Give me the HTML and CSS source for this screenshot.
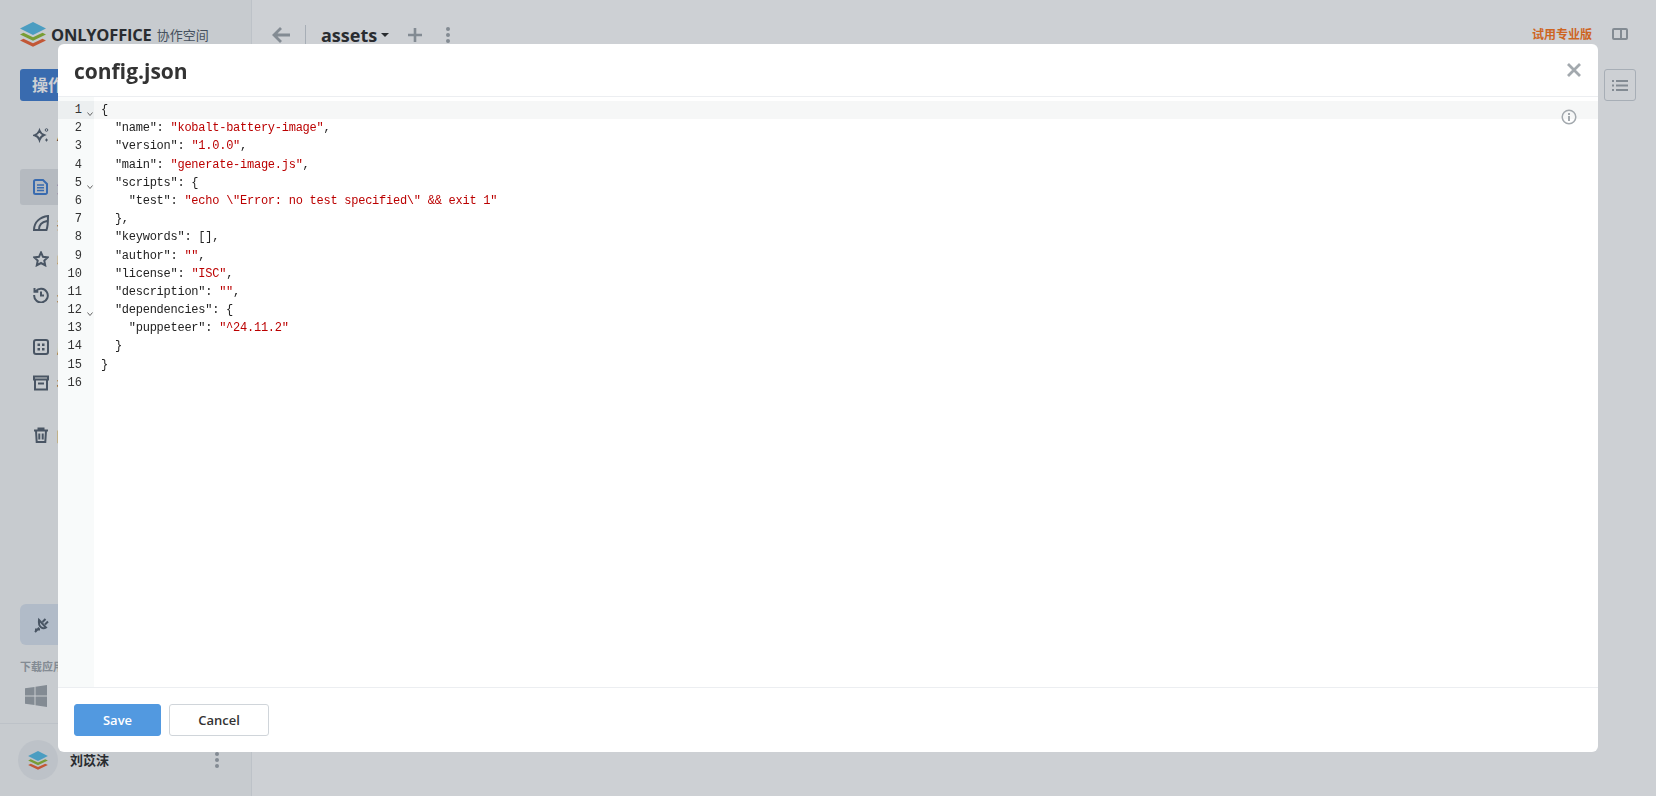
FILE: index.html
```html
<!DOCTYPE html>
<html lang="zh">
<head>
<meta charset="utf-8">
<title>config.json</title>
<link rel="stylesheet" href="styles.css">
</head>
<body>
<div class="app">
  <aside class="sidebar">
    <div class="logo">
      <svg class="logo-mark" viewBox="0 0 26 25"><path fill="#f2683a" d="M0 18.500 3.500 16.800 13 21.200 22.500 16.800 26 18.500 13 24.700z"/><path fill="#95c038" d="M0 12.500 3.500 10.800 13 15.200 22.500 10.800 26 12.500 13 18.700z"/><path fill="#5dc0e8" d="M13 0 26 6.500 13 13 0 6.500z"/></svg>
      <span class="logo-word">ONLYOFFICE</span><span class="logo-sub">协作空间</span>
    </div>
    <div class="action">操作</div>
    <nav class="nav-group">
      <div class="nav-item"><svg class="ico" viewBox="0 0 16 16"><path class="ln" d="M6.500 3.500C7.500 6 8.500 7 11 8 8.500 9 7.500 10 6.500 13 5.500 10 4.500 9 1.500 8.300 4.500 7 5.500 6 6.500 3.500z"/><circle class="thin" cx="13.500" cy="3" r="1.300"/><path class="thin" d="M13.500 11.500v3M12 13h3"/></svg><span>AI 代理</span></div>
    </nav>
    <nav class="nav-group">
      <div class="nav-item active"><svg class="ico" viewBox="0 0 16 16"><path class="doc" d="M2.500 1h7.500l4 4v8.500a1.500 1.500 0 0 1-1.500 1.500h-10A1.500 1.500 0 0 1 1 13.500v-11A1.500 1.500 0 0 1 2.500 1z"/><path class="doc-lines" d="M4 6h7M4 8.700h7M4 11.400h7"/></svg><span class="blue">文档</span></div>
      <div class="nav-item"><svg class="ico" viewBox="0 0 16 16"><path class="ln" d="M1 15h12.500C15 11 15 6 15 1 7 2 1 7 1 15zM6 14.500C6 10 9 7 14 6"/></svg><span>共享</span></div>
      <div class="nav-item"><svg class="ico" viewBox="0 0 16 16"><path class="ln" d="m8 1.500 2 4.300 4.700.6-3.400 3.200.9 4.700L8 12l-4.200 2.300.9-4.700L1.300 6.400 6 5.800z"/></svg><span>收藏</span></div>
      <div class="nav-item"><svg class="ico" viewBox="0 0 16 16"><path class="ln" d="M2.800 4.200A6.800 6.800 0 1 1 1.200 8M1.500 1v3.800H5.300M8 4.500V8.500h3"/></svg><span>最近</span></div>
    </nav>
    <nav class="nav-group">
      <div class="nav-item"><svg class="ico" viewBox="0 0 16 16"><rect class="ln" x="1" y="1" width="14" height="14" rx="2"/><path fill="#5a6673" d="M4.500 4.500h2.500V7H4.500zm4.500 0h2.500V7H9zM4.500 9H7v2.500H4.500zM9 9h2.500v2.500H9z"/></svg><span>房间</span></div>
      <div class="nav-item"><svg class="ico" viewBox="0 0 16 16"><path class="ln" d="M1 1.500h14v3H1zM2 4.500v10h12v-10M5 8.500h6"/></svg><span>存档</span></div>
    </nav>
    <nav class="nav-group">
      <div class="nav-item"><svg class="ico" viewBox="0 0 16 16"><path class="ln" d="M1 3.500h14M5.500 3.500V1.500h5v2M3 3.500l.7 11.500h8.600l.7-11.500M6.300 6.500v6M9.700 6.500v6"/></svg><span>回收站</span></div>
    </nav>
    <div class="spacer"></div>
    <div class="plug"><svg class="ico" viewBox="0 0 16 16"><path class="ln" d="M5 3 12 10.500C9 12.500 4 10.500 5 3zM1 15l4.200-4.200M8.500 5 11.500 2M11 7.500 14 4.500M1 12.500h5"/></svg></div>
    <div class="download">下载应用</div>
    <svg class="windows" viewBox="0 0 22 22"><path fill="#a3a9ae" d="M0 3.300 9.500 2v8.500H0zM10.500 1.800 22 0v10.500H10.500zM0 11.500h9.500V20L0 18.700zM10.500 11.500H22V22l-11.500-1.800z"/></svg>
    <div class="profile">
      <div class="avatar"><svg class="avatar-mark" viewBox="0 0 26 25"><path fill="#f2683a" d="M0 18.500 3.500 16.800 13 21.200 22.500 16.800 26 18.500 13 24.700z"/><path fill="#95c038" d="M0 12.500 3.500 10.800 13 15.200 22.500 10.800 26 12.500 13 18.700z"/><path fill="#5dc0e8" d="M13 0 26 6.500 13 13 0 6.500z"/></svg></div>
      <span class="name">刘苡沫</span>
      <span class="dots"><i></i><i></i><i></i></span>
    </div>
  </aside>
  <main class="main">
    <header class="topbar">
      <svg class="back" viewBox="0 0 18 16"><path fill="none" stroke="#a3a9ae" stroke-width="2.800" d="M18 8H2M9 1 2 8l7 7"/></svg>
      <span class="divider"></span>
      <span class="crumb">assets</span>
      <span class="caret"></span>
      <svg class="plus" viewBox="0 0 14 14"><path fill="none" stroke="#a3a9ae" stroke-width="2.600" d="M7 0v14M0 7h14"/></svg>
      <span class="dots top-dots"><i></i><i></i><i></i></span>
      <span class="grow"></span>
      <span class="trial">试用专业版</span>
      <svg class="panel" viewBox="0 0 16 12"><rect x="1" y="1" width="14" height="10" rx="1" fill="none" stroke="#a3a9ae" stroke-width="2"/><path d="M9 1v10" stroke="#a3a9ae" stroke-width="2"/></svg>
    </header>
    <div class="toolrow">
      <div class="list-btn"><svg viewBox="0 0 16 11"><path fill="#a3a9ae" d="M0 0h2v2H0zm4 0h12v2H4zM0 4.500h2v2H0zm4 0h12v2H4zM0 9h2v2H0zm4 0h12v2H4z"/></svg></div>
    </div>
  </main>
</div>
<div class="overlay"></div>
<section class="modal">
  <header class="modal-head">
    <h1>config.json</h1>
    <svg class="close" viewBox="0 0 14 14"><path fill="none" stroke="#a3a9ae" stroke-width="2.800" d="M1 1l12 12M13 1 1 13"/></svg>
  </header>
  <div class="editor">
    <div class="gutter">
      <div class="gnum on"><b>1</b><svg class="fold" viewBox="0 0 6 4"><path d="M.5.500 3 3.500 5.500.500"/></svg></div>
      <div class="gnum"><b>2</b></div>
      <div class="gnum"><b>3</b></div>
      <div class="gnum"><b>4</b></div>
      <div class="gnum"><b>5</b><svg class="fold" viewBox="0 0 6 4"><path d="M.5.500 3 3.500 5.500.500"/></svg></div>
      <div class="gnum"><b>6</b></div>
      <div class="gnum"><b>7</b></div>
      <div class="gnum"><b>8</b></div>
      <div class="gnum"><b>9</b></div>
      <div class="gnum"><b>10</b></div>
      <div class="gnum"><b>11</b></div>
      <div class="gnum"><b>12</b><svg class="fold" viewBox="0 0 6 4"><path d="M.5.500 3 3.500 5.500.500"/></svg></div>
      <div class="gnum"><b>13</b></div>
      <div class="gnum"><b>14</b></div>
      <div class="gnum"><b>15</b></div>
      <div class="gnum"><b>16</b></div>
    </div>
    <div class="code">
      <div class="line on">{</div>
      <div class="line">  "name": <s>"kobalt-battery-image"</s>,</div>
      <div class="line">  "version": <s>"1.0.0"</s>,</div>
      <div class="line">  "main": <s>"generate-image.js"</s>,</div>
      <div class="line">  "scripts": {</div>
      <div class="line">    "test": <s>"echo \"Error: no test specified\" &amp;&amp; exit 1"</s></div>
      <div class="line">  },</div>
      <div class="line">  "keywords": [],</div>
      <div class="line">  "author": <s>""</s>,</div>
      <div class="line">  "license": <s>"ISC"</s>,</div>
      <div class="line">  "description": <s>""</s>,</div>
      <div class="line">  "dependencies": {</div>
      <div class="line">    "puppeteer": <s>"^24.11.2"</s></div>
      <div class="line">  }</div>
      <div class="line">}</div>
      <div class="line"> </div>
    </div>
    <svg class="info" viewBox="0 0 16 16"><circle cx="8" cy="8" r="6.800" fill="none" stroke="#a3a9ae" stroke-width="1.500"/><path fill="#a3a9ae" d="M7 7h2v5H7zM7 4h2v2H7z"/></svg>
  </div>
  <footer class="modal-foot">
    <button class="btn save">Save</button>
    <button class="btn cancel">Cancel</button>
  </footer>
</section>
</body>
</html>
```
FILE: styles.css
```css
* { box-sizing: border-box; }
html, body { margin: 0; height: 100%; overflow: hidden; }
body {
  font-family: "Open Sans", "Noto Sans CJK SC", sans-serif;
  background: #fff;
  color: #333;
}
.app { display: flex; height: 796px; }

/* sidebar */
.sidebar {
  width: 252px;
  flex: none;
  display: flex;
  flex-direction: column;
  background: #f8f9f9;
  border-right: 1px solid #eceef1;
  padding-top: 22px;
}
.logo { display: flex; align-items: center; height: 25px; margin-left: 20px; }
.logo-mark { width: 26px; height: 25px; }
.logo-word { margin-left: 5px; font-size: 16.500px; font-weight: 700; color: #333; letter-spacing: -.2px; }
.logo-sub { margin-left: 5px; font-size: 13px; color: #555f6b; }
.action {
  margin: 22px 0 0 20px;
  width: 212px;
  height: 32px;
  line-height: 32px;
  padding-left: 12px;
  border-radius: 3px;
  background: #4781d1;
  color: #fff;
  font-size: 16px;
  font-weight: 700;
}
.nav-group { margin-top: 16px; }
.nav-item {
  display: flex;
  align-items: center;
  gap: 8px;
  height: 36px;
  margin-left: 20px;
  padding-left: 13px;
  border-radius: 3px 0 0 3px;
  font-size: 13px;
  font-weight: 600;
  color: #333;
}
.nav-item.active { background: #e1e4e7; }
.blue { color: #3d7ac8; }
.ico { width: 16px; height: 16px; flex: none; }
.ln { fill: none; stroke: #5a6673; stroke-width: 2; }
.thin { fill: none; stroke: #5a6673; stroke-width: 1; }
.doc { fill: none; stroke: #4781d1; stroke-width: 2; }
.doc-lines { fill: none; stroke: #4781d1; stroke-width: 1.500; }
.spacer { flex: 1; }
.plug {
  display: flex;
  align-items: center;
  margin-left: 20px;
  width: 212px;
  height: 41px;
  padding-left: 14px;
  border-radius: 6px;
  background: #dce5f1;
}
.download { margin: 14px 0 0 20px; height: 16px; line-height: 16px; font-size: 11px; font-weight: 600; color: #a3a9ae; }
.windows { width: 22px; height: 22px; margin: 10px 0 0 25px; }
.profile {
  display: flex;
  align-items: center;
  height: 73px;
  margin-top: 16px;
  padding-left: 18px;
  border-top: 1px solid #eceef1;
}
.avatar {
  display: flex;
  align-items: center;
  justify-content: center;
  width: 40px;
  height: 40px;
  border-radius: 50%;
  background: #eceef1;
}
.avatar-mark { width: 20px; height: 19px; }
.name { margin: -2px 0 0 12px; font-size: 13px; font-weight: 700; color: #333; }
.dots { display: flex; flex-direction: column; gap: 2px; }
.dots i { width: 4px; height: 4px; border-radius: 50%; background: #a3a9ae; }
.profile .dots { margin-left: 106px; }

/* main */
.main { flex: 1; display: flex; flex-direction: column; min-width: 0; }
.topbar { display: flex; align-items: center; height: 46px; padding: 24px 0 0 20px; }
.back { width: 18px; height: 16px; }
.divider { width: 1px; height: 20px; margin-left: 15px; background: #d0d5da; }
.crumb { margin-left: 15px; font-size: 18px; font-weight: 700; color: #333; line-height: 20px; }
.caret { margin-left: 4px; width: 0; height: 0; border: 4px solid transparent; border-top: 4px solid #333; border-bottom: 0; }
.plus { width: 14px; height: 14px; margin-left: 19px; }
.top-dots { margin-left: 24px; }
.grow { flex: 1; }
.trial { margin: -2px 20px 0 0; font-size: 12px; font-weight: 700; color: #ff7a1f; }
.panel { width: 16px; height: 12px; margin: -2px 28px 0 0; }
.toolrow { display: flex; justify-content: flex-end; padding: 23px 20px 0 0; }
.list-btn {
  display: flex;
  align-items: center;
  justify-content: center;
  width: 32px;
  height: 32px;
  border: 1px solid #d0d5da;
  border-radius: 3px;
}
.list-btn svg { width: 16px; height: 11px; }

/* overlay + modal */
.overlay { position: fixed; inset: 0; background: rgba(6, 22, 38, .2); }
.modal {
  position: fixed;
  left: 58px;
  top: 44px;
  width: 1540px;
  height: 708px;
  display: flex;
  flex-direction: column;
  background: #fff;
  border-radius: 6px;
  overflow: hidden;
}
.modal-head {
  display: flex;
  align-items: center;
  justify-content: space-between;
  height: 53px;
  flex: none;
  padding: 0 17px 0 16px;
  border-bottom: 1px solid #eceef1;
}
.modal-head h1 { margin: 2px 0 0; font-size: 21px; font-weight: 700; color: #333; line-height: 51px; }
.close { width: 14px; height: 14px; margin-top: -1px; }
.editor {
  position: relative;
  flex: 1;
  display: flex;
  min-height: 0;
  padding-top: 4px;
  font-family: "Liberation Mono", monospace;
  font-size: 12px;
  line-height: 18.200px;
}
.gutter {
  width: 36px;
  flex: none;
  margin-top: -4px;
  padding-top: 4px;
  background: #f8fafa;
  color: #333;
}
.gnum { position: relative; height: 18.200px; padding-right: 12px; text-align: right; }
.gnum b { font-weight: 400; }
.gnum.on { background: #eceff0; }
.fold { position: absolute; left: 29px; top: 11px; width: 6px; height: 4px; fill: none; stroke: #666; stroke-width: 1; }
.code { flex: 1; color: #222; letter-spacing: -.25px; }
.line { height: 18.200px; padding-left: 7px; white-space: pre; }
.line.on { background: #f6f7f7; }
.line s { text-decoration: none; color: #b00; }
.info { position: absolute; right: 21px; top: 12px; width: 16px; height: 16px; }
.modal-foot {
  display: flex;
  gap: 8px;
  height: 65px;
  flex: none;
  padding: 16px 16px 0;
  border-top: 1px solid #eceef1;
}
.btn {
  height: 32px;
  border-radius: 3px;
  font-family: "Open Sans", sans-serif;
  font-size: 13px;
  font-weight: 600;
  padding: 0;
}
.save { width: 87px; background: #5299e0; border: 1px solid #5299e0; color: #fff; }
.cancel { width: 100px; background: #fff; border: 1px solid #d0d5da; color: #333; }
```
